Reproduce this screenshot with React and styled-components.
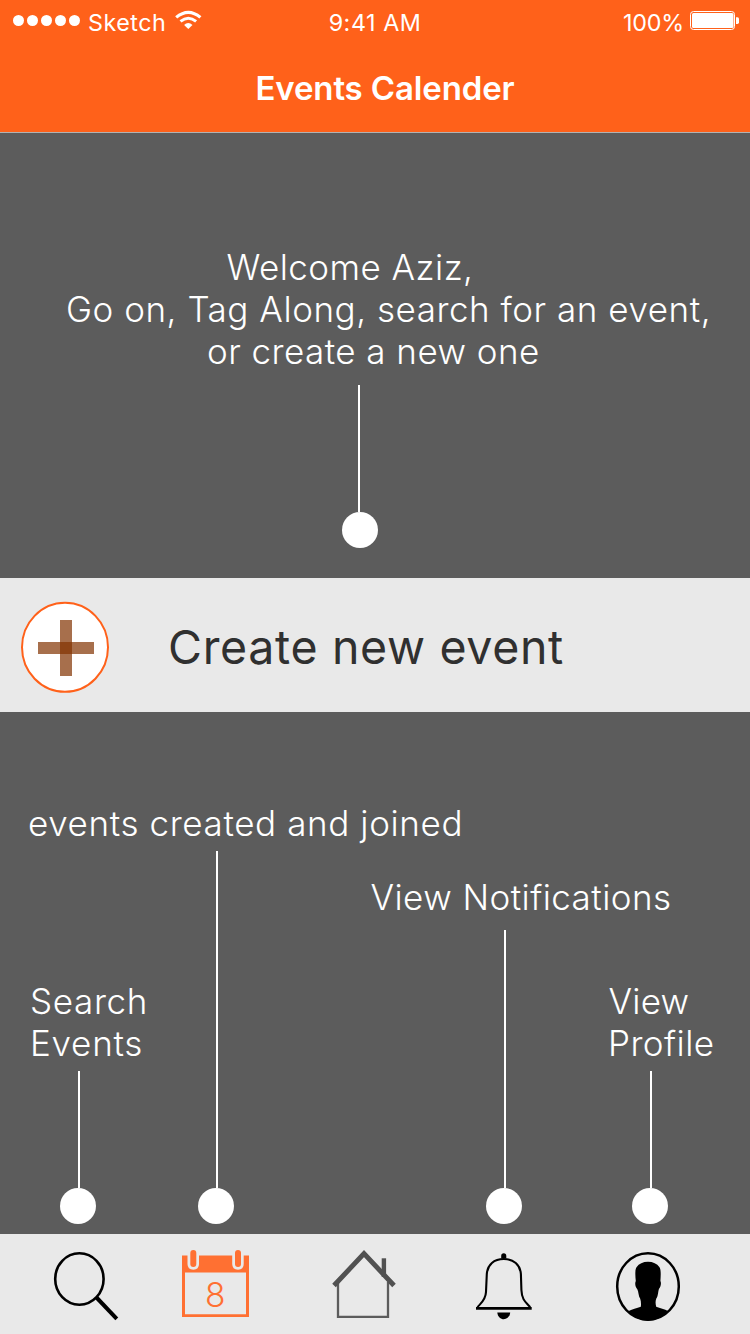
import React from 'react';
import styled, { createGlobalStyle } from 'styled-components';

const ORANGE = '#ff611a';
const CALENDAR = '#ff7032';

const GlobalStyle = createGlobalStyle`
  *, *::before, *::after { box-sizing: border-box; }
  body {
    margin: 0;
    background: #5c5c5c;
    font-family: Inter, "Liberation Sans", sans-serif;
  }
  svg { display: block; }
`;

const Screen = styled.main`
  display: flex;
  flex-direction: column;
  width: 750px;
  height: 1334px;
  overflow: hidden;
  background: #5c5c5c;
  color: #fff;
`;

const Header = styled.header`
  flex: none;
  height: 133px;
  background: ${ORANGE};
  border-bottom: 1px solid #b2b2b2;
`;

const StatusBar = styled.div`
  display: grid;
  grid-template-columns: 1fr auto 1fr;
  height: 40px;
  padding: 0 11px 0 13px;
  font-size: 23.3px;
  line-height: 45px;
  white-space: nowrap;
`;

const Carrier = styled.div`
  display: flex;
  letter-spacing: 0.5px;
`;

const Dots = styled.div`
  display: flex;
  gap: 3px;
  margin: 15px 8px 0 0;
`;

const SignalDot = styled.i`
  width: 11px;
  height: 11px;
  border-radius: 50%;
  background: #fff;
`;

const CarrierName = styled.span`
  width: 86px;
`;

const Clock = styled.div`
  margin-right: 2px;
  letter-spacing: 0.55px;
`;

const Battery = styled.div`
  display: flex;
  justify-content: flex-end;
  gap: 5px;
  letter-spacing: -0.2px;
`;

const Title = styled.h1`
  margin: 26px 0 0 255.5px;
  font-size: 33px;
  font-weight: 600;
  line-height: 44px;
  letter-spacing: -0.14px;
  white-space: nowrap;
`;

const Welcome = styled.section`
  flex: none;
  display: flex;
  flex-direction: column;
  height: 445px;
  padding-top: 113px;
`;

const Line = styled.p`
  margin: 0 0 0 ${(p) => p.$indent}px;
  font-size: 35px;
  font-weight: 300;
  line-height: 42px;
  letter-spacing: ${(p) => p.$track ?? 0.6}px;
  white-space: nowrap;
`;

const Pointer = styled.div`
  display: flex;
  flex-direction: column;
  width: 36px;
  margin: ${(p) => p.$margin ?? '0'};

  &::before {
    content: '';
    width: 2px;
    height: ${(p) => p.$length}px;
    margin-left: ${(p) => p.$offset ?? 18}px;
    background: #fff;
  }

  &::after {
    content: '';
    height: 36px;
    border-radius: 50%;
    background: #fff;
  }
`;

const CreateRow = styled.button`
  flex: none;
  display: flex;
  align-items: center;
  height: 134px;
  padding: 0 0 0 20px;
  border: 0;
  background: #e9e9e9;
  color: #303030;
  font: 400 46.5px/60px Inter, "Liberation Sans", sans-serif;
  letter-spacing: 0.66px;
  white-space: nowrap;
`;

const CreateLabel = styled.span`
  margin: 4px 0 0 58px;
`;

const Guide = styled.section`
  flex: none;
  display: flex;
  align-items: flex-end;
  height: 522px;
  padding: 0 0 10px 60px;
`;

const Callout = styled.div`
  flex: none;
  width: 36px;
  margin-right: ${(p) => p.$after}px;
`;

const TabBar = styled.nav`
  flex: none;
  display: grid;
  grid-template-columns: 130px 150px 143px 140px 80px;
  height: 100px;
  padding-left: 50px;
  background: #e9e9e9;
`;

const Wifi = () => (
  <svg width="28" height="40" viewBox="174 0 28 40" fill="none" stroke="#fff">
    <path d="M176.2 17.4Q188.3 7.2 200.4 17.4" strokeWidth="3.2" />
    <path d="M180.5 21.4Q188.3 15 196.1 21.4" strokeWidth="3" />
    <path d="M184.1 25Q188.2 21.1 192.5 25L188.3 29Z" fill="#fff" stroke="none" />
  </svg>
);

const BatteryIcon = () => (
  <svg width="50" height="40" viewBox="689 0 50 40">
    <rect x="690.5" y="11.5" width="44" height="18" rx="3" fill="none" stroke="#fff" />
    <rect x="692" y="13" width="41.5" height="15" rx="1.5" fill="#fff" />
    <path d="M736 17.3H737.5Q739 17.3 739 19V22.3Q739 24 737.5 24H736Z" fill="#fff" />
  </svg>
);

const PlusIcon = () => (
  <svg width="90" height="134" viewBox="20 578 90 134">
    <ellipse cx="65" cy="647.3" rx="43" ry="44.5" fill="#fff" stroke={ORANGE} strokeWidth="2" />
    <g fill="#823200" fillOpacity=".7">
      <path d="M60 620H72V676H60Z" />
      <path d="M38 642H94V654H38Z" />
    </g>
  </svg>
);

const SearchIcon = () => (
  <svg width="72" height="100" viewBox="50 1234 72 100" fill="none" stroke="#000">
    <ellipse cx="79.4" cy="1279" rx="24.2" ry="25.7" strokeWidth="2.6" />
    <path d="M96 1297L116.8 1318.8" strokeWidth="4" />
  </svg>
);

const CalendarIcon = () => (
  <svg width="72" height="100" viewBox="180 1234 72 100" fill={CALENDAR}>
    <path fillRule="evenodd" d="M182 1255.5H249V1317H182ZM185 1272.5V1314.3H246V1272.5Z" />
    <g fill="#e9e9e9">
      <path d="M187.5 1255V1264Q187.5 1269.7 193.3 1269.7Q199 1269.7 199 1264V1255Z" />
      <path d="M232.2 1255V1264Q232.2 1269.7 238 1269.7Q243.7 1269.7 243.7 1264V1255Z" />
    </g>
    <rect x="190.3" y="1250" width="6" height="17" rx="3" />
    <rect x="235" y="1250" width="6" height="17" rx="3" />
    <text x="215.3" y="1307" textAnchor="middle" fontFamily="Inter" fontSize="33.5" fontWeight="350">8</text>
  </svg>
);

const HomeIcon = () => (
  <svg width="72" height="100" viewBox="330 1234 72 100" fill="none" stroke="#515151">
    <path d="M338 1282V1316.8H388V1282" stroke="#5c5c5c" strokeWidth="2.3" />
    <path d="M383.9 1258.3V1277" strokeWidth="4.4" />
    <path d="M334 1285.5L364 1253.6L394 1285.5" strokeWidth="4.9" />
  </svg>
);

const BellIcon = () => (
  <svg width="72" height="100" viewBox="473 1234 72 100" fill="none" stroke="#000">
    <path
      d="M477.5 1307.2C480.5 1303.2 485.6 1300.5 486 1292L486.8 1274C487.5 1264.5 494 1259 503.8 1259C513.6 1259 520.2 1264.5 520.9 1274L521.4 1290C521.9 1301 526.6 1302.5 530.2 1307.2"
      strokeWidth="2.1"
    />
    <path d="M476 1308.4H531.7" strokeWidth="2.7" />
    <path d="M501.2 1258.5V1256A2.5 2.7 0 0 1 506.3 1256V1258.5Z" fill="#000" stroke="none" />
    <path d="M497.3 1312.4H510.2C509.5 1321.4 498 1321.4 497.3 1312.4Z" fill="#000" stroke="none" />
  </svg>
);

const ProfileIcon = () => (
  <svg width="72" height="100" viewBox="613 1234 72 100">
    <ellipse cx="648" cy="1286.5" rx="30.8" ry="33.2" fill="none" stroke="#000" strokeWidth="2.5" />
    <path d="M648 1261.8C653 1261.8 657 1263.7 659.5 1267.3C661.2 1270 660.7 1276 660.4 1281C661.5 1282.5 660.8 1287 659.2 1288.6C657.9 1291 658.4 1296 656.3 1298.6C655.3 1301 655.4 1304 656.2 1306.7C660 1308.3 664.5 1308.8 668.4 1311.2Q659 1320.8 648 1320.8Q637 1320.8 627.6 1311.5C632 1308.8 637 1308.4 640.8 1306.7C641.2 1304 641 1301 640.2 1298.8C638.3 1296 638.6 1291.5 637.3 1289.2C635.4 1287 634.6 1283.5 635.8 1281C635.3 1276 634.8 1270 636.5 1267.3C639 1263.7 643 1261.8 648 1261.8Z" />
  </svg>
);

export default function App() {
  return (
    <Screen>
      <GlobalStyle />
      <Header>
        <StatusBar>
          <Carrier>
            <Dots>
              {[0, 1, 2, 3, 4].map((n) => (
                <SignalDot key={n} />
              ))}
            </Dots>
            <CarrierName>Sketch</CarrierName>
            <Wifi />
          </Carrier>
          <Clock>9:41 AM</Clock>
          <Battery>
            <span>100%</span>
            <BatteryIcon />
          </Battery>
        </StatusBar>
        <Title>Events Calender</Title>
      </Header>

      <Welcome>
        <Line $indent={226.5} $track={0.45}>Welcome Aziz,</Line>
        <Line $indent={66} $track={0.53}>Go on, Tag Along, search for an event,</Line>
        <Line $indent={207} $track={0.45}>or create a new one</Line>
        <Pointer $length={127} $offset={16} $margin="13px 0 0 342px" />
      </Welcome>

      <CreateRow type="button">
        <PlusIcon />
        <CreateLabel>Create new event</CreateLabel>
      </CreateRow>

      <Guide>
        <Callout $after={102}>
          <Line $indent={-30} $track={0.65}>Search</Line>
          <Line $indent={-30} $track={0.75}>Events</Line>
          <Pointer $length={117} $margin="7px 0 0" />
        </Callout>
        <Callout $after={252}>
          <Line $indent={-170} $track={0.61}>events created and joined</Line>
          <Pointer $length={337} $margin="7px 0 0" />
        </Callout>
        <Callout $after={110}>
          <Line $indent={-115.5} $track={0.44}>View Notifications</Line>
          <Pointer $length={258} $margin="12px 0 0" />
        </Callout>
        <Callout $after={0}>
          <Line $indent={-23.5} $track={0.2}>View</Line>
          <Line $indent={-24} $track={0.45}>Profile</Line>
          <Pointer $length={117} $margin="7px 0 0" />
        </Callout>
      </Guide>

      <TabBar>
        <SearchIcon />
        <CalendarIcon />
        <HomeIcon />
        <BellIcon />
        <ProfileIcon />
      </TabBar>
    </Screen>
  );
}
